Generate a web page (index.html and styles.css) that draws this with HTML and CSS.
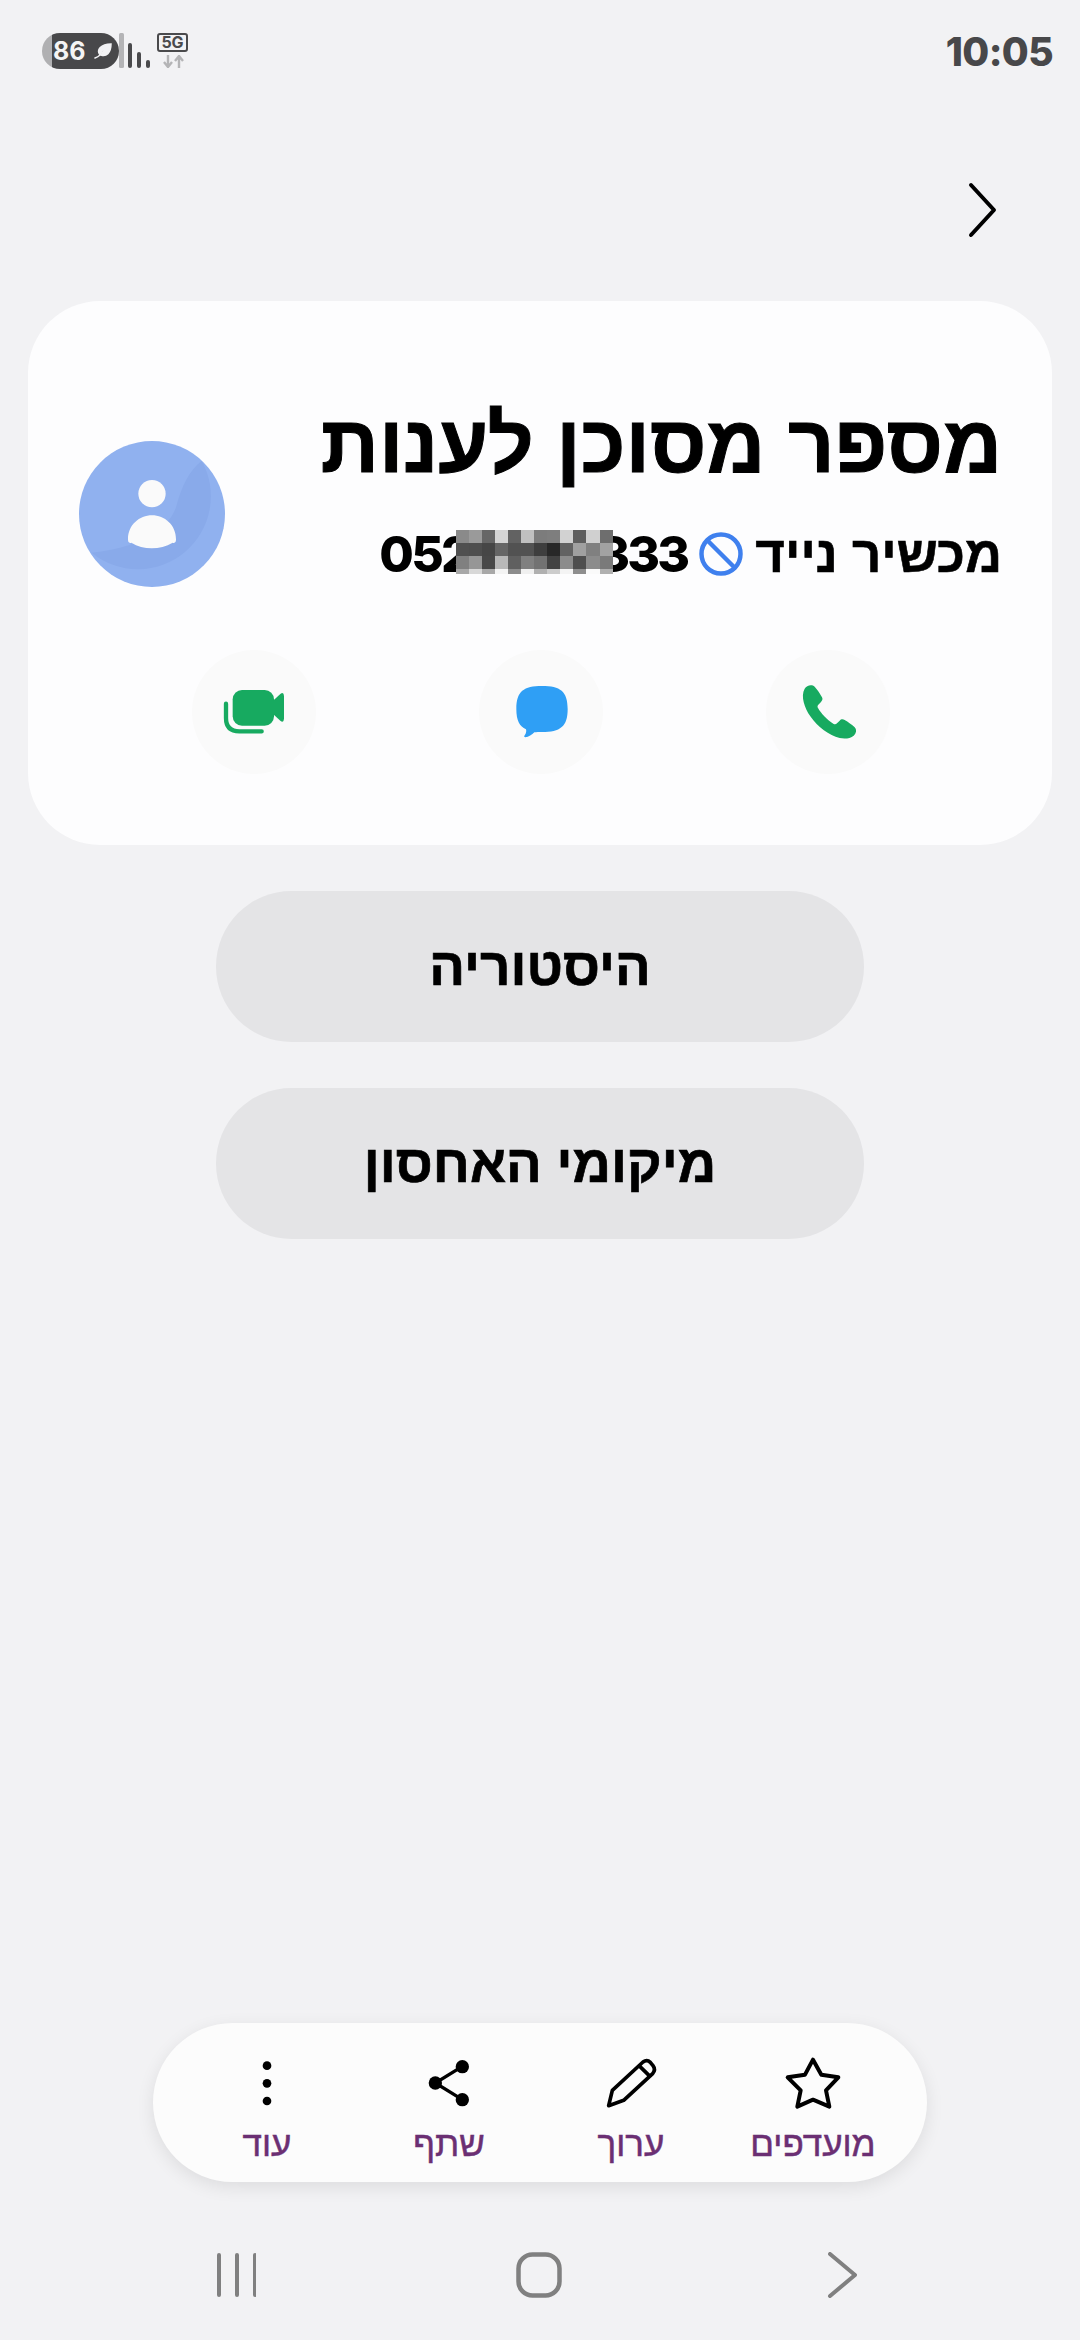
FILE: index.html
```html
<!DOCTYPE html>
<html lang="he" dir="rtl">
<head>
  <meta charset="UTF-8" />
  <meta name="viewport" content="width=device-width, initial-scale=1" />
  <title>מספר מסוכן לענות</title>
  <link rel="stylesheet" href="styles.css">
</head>
<body>
  <div class="page">
    <!-- status bar -->
    <div class="statusbar">
      <span class="time">10:05</span>
      <div class="status-icons">
        <div class="battery">
          <span>86</span>
          <svg class="leaf" viewBox="0 0 20 20"><path d="M2 17 C5 16 6 15 7 14 C3 9 8 3 18 3 C18 12 13 16 8 14 M11 8 C9 10 8 11 7 14" fill="#f2f2f4" stroke="#f2f2f4" stroke-width="1.5" stroke-linecap="round"/></svg>
        </div>
        <svg class="signal" width="32" height="36" viewBox="0 0 32 36">
          <rect x="0" y="0" width="5" height="35" rx="1.5" fill="#b4b4b6"/>
          <rect x="9" y="10" width="4" height="25" rx="2" fill="#4a4a4c"/>
          <rect x="18" y="19" width="4" height="16" rx="2" fill="#4a4a4c"/>
          <rect x="27" y="27" width="4" height="8" rx="2" fill="#4a4a4c"/>
        </svg>
        <div class="network">
          <span class="net-type">5G</span>
          <svg width="22" height="13" viewBox="0 0 22 13">
            <path d="M6 0 V11 M2 7 L6 12 L10 7" fill="none" stroke="#b4b4b6" stroke-width="2.4"/>
            <path d="M17 13 V2 M13 6 L17 1 L21 6" fill="none" stroke="#b4b4b6" stroke-width="2.4"/>
          </svg>
        </div>
      </div>
    </div>

    <div class="topbar">
      <svg width="30" height="56" viewBox="0 0 30 56"><path d="M4 3 L27 28 L4 53" fill="none" stroke="#000" stroke-width="4" stroke-linecap="round" stroke-linejoin="round"/></svg>
    </div>

    <!-- contact card -->
    <section class="card">
      <div class="card-head">
        <div class="card-text">
          <h1 class="title">מספר מסוכן לענות</h1>
          <div class="device-row">
            <span>מכשיר נייד</span>
            <svg class="blocked" width="44" height="44" viewBox="0 0 44 44"><circle cx="22" cy="22" r="19.5" fill="none" stroke="#3f80ee" stroke-width="4.5"/><path d="M8 8 L36 36" stroke="#3f80ee" stroke-width="4.5"/></svg>
            <span class="phone-number" dir="ltr">0520000333
              <svg class="mosaic" width="157" height="44" viewBox="0 0 157 44" shape-rendering="crispEdges">
                <g>
                  <rect x="0" y="0" width="13" height="13" fill="#8a8a8a"/><rect x="13" y="0" width="13" height="13" fill="#9a9a9a"/><rect x="26" y="0" width="13" height="13" fill="#666"/><rect x="39" y="0" width="13" height="13" fill="#d4d4d4"/><rect x="52" y="0" width="13" height="13" fill="#626262"/><rect x="65" y="0" width="13" height="13" fill="#c0c0c0"/><rect x="78" y="0" width="13" height="13" fill="#7c7c7c"/><rect x="91" y="0" width="13" height="13" fill="#7e7e7e"/><rect x="104" y="0" width="13" height="13" fill="#d2d2d2"/><rect x="117" y="0" width="13" height="13" fill="#5e5e5e"/><rect x="130" y="0" width="14" height="13" fill="#d0d0d0"/><rect x="144" y="0" width="13" height="13" fill="#6e6e6e"/>
                  <rect x="0" y="13" width="13" height="13" fill="#505050"/><rect x="13" y="13" width="13" height="13" fill="#4e4e4e"/><rect x="26" y="13" width="13" height="13" fill="#464646"/><rect x="39" y="13" width="13" height="13" fill="#666"/><rect x="52" y="13" width="13" height="13" fill="#525252"/><rect x="65" y="13" width="13" height="13" fill="#525252"/><rect x="78" y="13" width="13" height="13" fill="#3e3e3e"/><rect x="91" y="13" width="13" height="13" fill="#282828"/><rect x="104" y="13" width="13" height="13" fill="#626262"/><rect x="117" y="13" width="13" height="13" fill="#a0a0a0"/><rect x="130" y="13" width="14" height="13" fill="#808080"/><rect x="144" y="13" width="13" height="13" fill="#a2a2a2"/>
                  <rect x="0" y="26" width="13" height="13" fill="#808080"/><rect x="13" y="26" width="13" height="13" fill="#969696"/><rect x="26" y="26" width="13" height="13" fill="#484848"/><rect x="39" y="26" width="13" height="13" fill="#b8b8b8"/><rect x="52" y="26" width="13" height="13" fill="#606060"/><rect x="65" y="26" width="13" height="13" fill="#808080"/><rect x="78" y="26" width="13" height="13" fill="#727272"/><rect x="91" y="26" width="13" height="13" fill="#424242"/><rect x="104" y="26" width="13" height="13" fill="#8c8c8c"/><rect x="117" y="26" width="13" height="13" fill="#4e4e4e"/><rect x="130" y="26" width="14" height="13" fill="#8c8c8c"/><rect x="144" y="26" width="13" height="13" fill="#7a7a7a"/>
                  <rect x="0" y="39" width="13" height="5" fill="#a8a8a8"/><rect x="13" y="39" width="13" height="5" fill="#d8d8d8"/><rect x="26" y="39" width="13" height="5" fill="#a8a8a8"/><rect x="39" y="39" width="13" height="5" fill="#f4f4f4"/><rect x="52" y="39" width="13" height="5" fill="#8c8c8c"/><rect x="65" y="39" width="13" height="5" fill="#f0f0f0"/><rect x="78" y="39" width="13" height="5" fill="#b0b0b0"/><rect x="91" y="39" width="13" height="5" fill="#ccc"/><rect x="104" y="39" width="13" height="5" fill="#f4f4f4"/><rect x="117" y="39" width="13" height="5" fill="#8e8e8e"/><rect x="130" y="39" width="14" height="5" fill="#fafafa"/><rect x="144" y="39" width="13" height="5" fill="#b0b0b0"/>
                </g>
              </svg>
            </span>
          </div>
        </div>
        <svg class="avatar" width="146" height="146" viewBox="57 33 438 438">
          <circle cx="276" cy="252" r="219" fill="#90b1ef"/>
          <path d="M425 92 C385 125 365 170 350 225 C330 300 230 355 95 368 A219 219 0 0 0 425 92 Z" fill="#89aaea"/>
          <circle cx="276" cy="191" r="41" fill="#fafafa"/>
          <path d="M204 328 C204 285 238 256 276 256 C314 256 348 285 348 328 C348 338 344 340 338 338 C300 360 250 360 214 338 C208 340 204 338 204 328 Z" fill="#fafafa"/>
        </svg>
      </div>

      <div class="actions">
        <button class="action-btn" aria-label="שיחה">
          <svg width="124" height="124" viewBox="-3 6 372 372"><path fill="#17aa60" d="M113 122 C119 112 134 108 143 116 C150 123 159 137 165 148 C168 153 166 158 162 162 L154 170 C151 173 151 177 153 180 C163 197 180 215 200 228 C204 230 207 229 210 226 L218 218 C222 213 228 213 233 216 C243 222 255 230 263 238 C270 246 268 256 260 263 C250 272 232 273 218 270 C186 262 153 238 130 205 C113 180 100 145 113 122 Z"/></svg>
        </button>
        <button class="action-btn" aria-label="הודעה">
          <svg width="124" height="124" viewBox="6 6 372 372"><path fill="#2f9ff5" d="M195 114 C250 114 272 130 272 183 C272 236 250 252 195 252 C186 252 178 252 172 253 C165 260 155 268 145 268 C141 268 141 265 143 262 C147 257 149 250 147 244 C128 235 118 218 118 183 C118 130 140 114 195 114 Z"/></svg>
        </button>
        <button class="action-btn" aria-label="וידאו">
          <svg width="124" height="124" viewBox="3 6 372 372">
            <rect x="125" y="126" width="124" height="107" rx="28" fill="#17aa60"/>
            <path d="M246 158 L268 138 Q278 130 279 144 V212 Q278 226 268 218 L246 198 Z" fill="#17aa60"/>
            <path d="M105 167 V210 Q105 250 145 250 H212" fill="none" stroke="#17aa60" stroke-width="13" stroke-linecap="round"/>
          </svg>
        </button>
      </div>
    </section>

    <div class="links">
      <button class="link-btn">היסטוריה</button>
      <button class="link-btn">מיקומי האחסון</button>
    </div>

    <div class="spacer"></div>

    <!-- bottom toolbar -->
    <nav class="toolbar">
      <div class="tool">
        <svg width="60" height="60" viewBox="577 38 180 180"><path d="M667 58 L692 103 L743 111 L706 150 L716 199 L667 178 L620 199 L630 150 L591 111 L643 103 Z" fill="none" stroke="#000" stroke-width="12" stroke-linejoin="round"/></svg>
        <span>מועדפים</span>
      </div>
      <div class="tool">
        <svg width="60" height="60" viewBox="32 38 180 180"><path d="M55 196 L66 150 L158 65 Q170 56 180 66 L188 76 Q197 88 187 100 L100 180 Z M146 76 L179 108" fill="none" stroke="#000" stroke-width="11" stroke-linejoin="round"/></svg>
        <span>ערוך</span>
      </div>
      <div class="tool">
        <svg width="60" height="60" viewBox="568 38 180 180"><path d="M698 78 L617 128 L698 178" fill="none" stroke="#000" stroke-width="10"/><circle cx="617" cy="128" r="20"/><circle cx="698" cy="79" r="20"/><circle cx="698" cy="178" r="20"/></svg>
        <span>שתף</span>
      </div>
      <div class="tool">
        <svg width="60" height="60" viewBox="25 38 180 180"><circle cx="115" cy="76" r="13"/><circle cx="115" cy="129" r="13"/><circle cx="115" cy="182" r="13"/></svg>
        <span>עוד</span>
      </div>
    </nav>

    <!-- android nav -->
    <div class="navbar">
      <svg width="30" height="46" viewBox="-1 0 30 46"><path d="M2 2 L27 23 L2 44" fill="none" stroke="#808080" stroke-width="4" stroke-linecap="round" stroke-linejoin="round"/></svg>
      <svg width="46" height="46" viewBox="0 0 46 46"><rect x="2.5" y="2.5" width="41" height="41" rx="14" fill="none" stroke="#808080" stroke-width="4.5"/></svg>
      <svg width="42" height="46" viewBox="-2 0 42 46"><path d="M3 3 V43 M21 3 V43 M39 3 V43" fill="none" stroke="#808080" stroke-width="4" stroke-linecap="round"/></svg>
    </div>
  </div>
</body>
</html>
```

FILE: styles.css
```css
* {
  box-sizing: border-box;
}

body {
  margin: 0;
  background-color: #f2f2f4;
  font-family: "Liberation Sans", "DejaVu Sans", sans-serif;
  color: #000;
}

.page {
  width: 1080px;
  height: 2340px;
  display: flex;
  flex-direction: column;
}

/* status bar */
.statusbar {
  display: flex;
  justify-content: space-between;
  align-items: center;
  height: 36px;
  margin-top: 33px;
  padding: 0 27px 0 42px;
}

.time {
  font-family: Inter, sans-serif;
  font-weight: 800;
  font-size: 39px;
  letter-spacing: -0.6px;
  color: #48484a;
  direction: ltr;
}

.status-icons {
  display: flex;
  align-items: flex-start;
  direction: ltr;
}

.battery {
  display: flex;
  align-items: center;
  gap: 7px;
  width: 77px;
  height: 36px;
  padding-left: 11px;
  border-radius: 18px;
  background: linear-gradient(to right, #b0b0b2 10px, #48484a 10px);
  color: #f4f4f4;
  font-family: Inter, sans-serif;
  font-weight: 700;
  font-size: 25px;
}

.leaf {
  width: 20px;
  height: 20px;
}

.network {
  display: flex;
  flex-direction: column;
  align-items: center;
  margin-left: 6px;
  gap: 3px;
}

.net-type {
  width: 31px;
  height: 19px;
  border: 2px solid #4a4a4c;
  border-radius: 3px;
  font-family: Inter, sans-serif;
  font-weight: 700;
  font-size: 16px;
  line-height: 15px;
  text-align: center;
  color: #4a4a4c;
}

.topbar {
  display: flex;
  justify-content: flex-start;
  padding: 0 83px;
  margin-top: 113px;
  height: 56px;
}

/* contact card */
.card {
  width: 1024px;
  height: 544px;
  margin: 63px auto 0;
  padding: 92px 50px 0 51px;
  background-color: #fdfdfe;
  border-radius: 72px;
}

.card-head {
  display: flex;
  justify-content: space-between;
  align-items: flex-end;
}

.title {
  margin: 0;
  font-size: 81px;
  line-height: 102px;
  font-weight: 700;
  -webkit-text-stroke: 1px #000;
}

.device-row {
  display: flex;
  align-items: center;
  gap: 12px;
  margin-top: 26px;
  height: 66px;
  font-size: 51px;
  font-weight: 700;
  -webkit-text-stroke: 0.6px #000;
}

.phone-number {
  position: relative;
  font-family: Inter, sans-serif;
  font-size: 50px;
  font-weight: 800;
  letter-spacing: -2.8px;
  -webkit-text-stroke: 0;
}

.mosaic {
  position: absolute;
  left: 77px;
  top: 6px;
}

.actions {
  display: flex;
  justify-content: center;
  gap: 163px;
  margin-top: 63px;
}

.action-btn {
  width: 124px;
  height: 124px;
  padding: 0;
  border: none;
  border-radius: 50%;
  background-color: #fafafa;
}

.action-btn svg {
  display: block;
}

/* buttons under the card */
.links {
  display: flex;
  flex-direction: column;
  align-items: center;
  gap: 46px;
  margin-top: 46px;
}

.link-btn {
  width: 648px;
  height: 151px;
  border: none;
  border-radius: 76px;
  background-color: #e4e4e6;
  color: #000;
  font-family: inherit;
  font-size: 53px;
  font-weight: 700;
  -webkit-text-stroke: 0.7px #000;
}

.spacer {
  flex: 1;
}

/* toolbar */
.toolbar {
  display: grid;
  grid-template-columns: repeat(4, 182px);
  justify-content: center;
  width: 774px;
  height: 159px;
  margin: 0 auto;
  padding-top: 30px;
  background-color: #fcfcfc;
  border-radius: 80px;
  box-shadow: 0 5px 18px rgba(0, 0, 0, 0.09);
}

.tool {
  display: flex;
  flex-direction: column;
  align-items: center;
  font-size: 35px;
  line-height: 40px;
  color: #6b2f73;
  -webkit-text-stroke: 0.5px #6b2f73;
}

.tool span {
  margin-top: 11px;
}

/* android nav */
.navbar {
  display: grid;
  grid-template-columns: repeat(3, 303.5px);
  justify-items: center;
  align-items: center;
  height: 46px;
  margin: 70px 0 42px;
  padding: 0 86px 0 83px;
}
```
